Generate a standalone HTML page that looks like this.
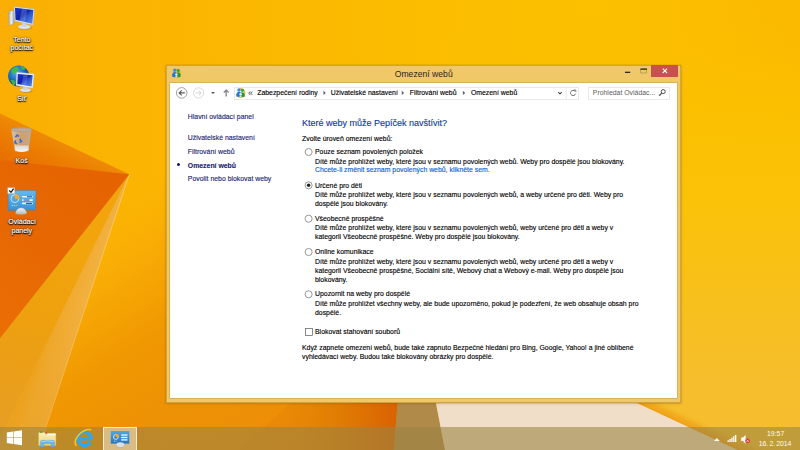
<!DOCTYPE html>
<html lang="cs">
<head>
<meta charset="utf-8">
<title>Omezení webů</title>
<style>
*{box-sizing:border-box;margin:0;padding:0}
html,body{width:800px;height:450px;overflow:hidden;background:#fbb10b;font-family:"Liberation Sans",sans-serif;}
#wall{position:absolute;left:0;top:0;width:800px;height:450px;display:block}
.dl{position:absolute;color:#fff;font-size:7px;line-height:8.6px;text-align:center;width:50px;text-shadow:0 .5px 1px rgba(0,0,0,1),0 0 1px rgba(0,0,0,.9),.4px .6px 1.5px rgba(0,0,0,.7),0 0 2.5px rgba(0,0,0,.4);-webkit-text-stroke:.15px #fff;white-space:nowrap}
.di{position:absolute;display:block}
#win{position:absolute;left:166px;top:64.5px;width:515.4px;height:338.1px;background:#f0c868;box-shadow:inset 0 0 0 .7px rgba(176,136,40,.75),0 0 0 .4px rgba(150,100,10,.35),0 .5px 3px rgba(120,70,0,.28)}
#client{position:absolute;left:4.2px;top:18.2px;width:506.8px;height:315.3px;background:#fff;box-shadow:0 0 0 .6px rgba(196,156,60,.8)}
#title{position:absolute;left:0;top:4px;width:100%;text-align:center;font-size:8.65px;line-height:10px;color:#2b2718}
#close{position:absolute;left:485px;top:0.3px;width:26.6px;height:12.3px;background:#c8504f}
.t{position:absolute;white-space:nowrap;font-size:6.9px;line-height:8.8px;color:#000;-webkit-text-stroke:.13px currentColor}
.nav{color:#1b1f73}
.link{color:#0560d8}
.h1{font-size:9px;line-height:11px;color:#0c3ca6}
.b{font-weight:bold}
.g{color:#5c5c5c;-webkit-text-stroke:0}
.box{position:absolute;border:0.7px solid #e9e9e9;background:#fff}
#taskbar{position:absolute;left:0;top:426.6px;width:800px;height:23.4px;background:rgba(154,131,67,.58)}
.tb{position:absolute;color:#fdfbf4;font-size:6.9px;line-height:8px;white-space:nowrap;text-align:center}
</style>
</head>
<body>
<svg id="wall" viewBox="0 0 800 450" width="800" height="450">
<defs>
<linearGradient id="gbase" x1="0" y1="0" x2="1" y2="0">
<stop offset="0" stop-color="#faae04"/><stop offset=".12" stop-color="#fbb302"/><stop offset=".5" stop-color="#fbbc00"/><stop offset=".75" stop-color="#fcc000"/><stop offset="1" stop-color="#fbb900"/>
</linearGradient>
<linearGradient id="gright" x1="0" y1="0" x2="0" y2="1">
<stop offset="0" stop-color="#fbbc00" stop-opacity="0"/><stop offset=".1" stop-color="#fbbe00" stop-opacity=".3"/><stop offset=".24" stop-color="#fbc000" stop-opacity=".9"/><stop offset=".45" stop-color="#fac208"/><stop offset=".85" stop-color="#f6be2c"/><stop offset="1" stop-color="#f6be30"/>
</linearGradient>
<linearGradient id="gmid" gradientUnits="userSpaceOnUse" x1="150" y1="185" x2="330" y2="470">
<stop offset="0" stop-color="#fab004" stop-opacity="0"/><stop offset=".14" stop-color="#f9ad05"/><stop offset=".3" stop-color="#f3a003"/><stop offset=".38" stop-color="#f09802"/><stop offset=".62" stop-color="#ed9004"/><stop offset=".85" stop-color="#ea8804"/><stop offset="1" stop-color="#e88204"/>
</linearGradient>
<linearGradient id="gmidr" gradientUnits="userSpaceOnUse" x1="285" y1="0" x2="398" y2="0">
<stop offset="0" stop-color="#e88808" stop-opacity=".5"/><stop offset=".45" stop-color="#e07c03" stop-opacity=".9"/><stop offset="1" stop-color="#d96203"/>
</linearGradient>
<linearGradient id="gfold" gradientUnits="userSpaceOnUse" x1="60" y1="250" x2="10" y2="420">
<stop offset="0" stop-color="#f1a40c"/><stop offset=".4" stop-color="#eea00e"/><stop offset="1" stop-color="#e89e22"/>
</linearGradient>
<linearGradient id="gwedge" gradientUnits="userSpaceOnUse" x1="50" y1="317" x2="80" y2="327">
<stop offset="0" stop-color="#eea214"/><stop offset=".3" stop-color="#f0aa2e"/><stop offset="1" stop-color="#f2b142"/>
</linearGradient>
<linearGradient id="gwfade" gradientUnits="userSpaceOnUse" x1="0" y1="300" x2="0" y2="440">
<stop offset="0" stop-color="#eba226" stop-opacity="0"/><stop offset="1" stop-color="#eba226" stop-opacity=".75"/>
</linearGradient>
<linearGradient id="gline" gradientUnits="userSpaceOnUse" x1="0" y1="174" x2="0" y2="450">
<stop offset="0" stop-color="#fbd98a" stop-opacity=".9"/><stop offset=".5" stop-color="#f8cf78" stop-opacity=".7"/><stop offset="1" stop-color="#f4c060" stop-opacity=".35"/>
</linearGradient>
<linearGradient id="gedge" gradientUnits="userSpaceOnUse" x1="680" y1="423" x2="684.600" y2="413">
<stop offset="0" stop-color="#ee9c16"/><stop offset=".15" stop-color="#f0a41a"/><stop offset=".5" stop-color="#f2aa1e" stop-opacity=".85"/><stop offset="1" stop-color="#f4b426" stop-opacity="0"/>
</linearGradient>
<linearGradient id="gsweep" gradientUnits="userSpaceOnUse" x1="120" y1="0" x2="200" y2="0">
<stop offset="0" stop-color="#ef940a" stop-opacity="0"/><stop offset="1" stop-color="#ef940a" stop-opacity=".45"/>
</linearGradient>
<linearGradient id="gdark" gradientUnits="userSpaceOnUse" x1="110" y1="180" x2="0" y2="330">
<stop offset="0" stop-color="#e56401"/><stop offset=".5" stop-color="#e76803"/><stop offset="1" stop-color="#ea6e04"/>
</linearGradient>
<linearGradient id="gband" gradientUnits="userSpaceOnUse" x1="30" y1="128" x2="11" y2="169">
<stop offset="0" stop-color="#ee8a06"/><stop offset=".45" stop-color="#eb7b01"/><stop offset="1" stop-color="#e76c01"/>
</linearGradient>
</defs>
<rect width="800" height="450" fill="url(#gbase)"/>
<rect x="440" width="360" height="450" fill="url(#gright)"/>
<polygon points="129.3,174 200,120 420,120 420,450 38,450 46.500,426" fill="url(#gmid)"/>
<polygon points="130,398 296,398 240,450 84,450" fill="url(#gsweep)"/>
<polygon points="296,398 398,398 393.700,450 240,450" fill="url(#gmidr)"/>
<polygon points="129.3,174 46.500,426 38,450 0,450 0,338" fill="url(#gfold)"/>
<polygon points="129.3,174 46.500,426 38.600,450 0,450 0,438" fill="url(#gwedge)"/>
<polygon points="129.3,174 46.500,426 38.600,450 0,450 0,438" fill="url(#gwfade)"/>
<line x1="129.300" y1="174" x2="38.400" y2="450" stroke="url(#gline)" stroke-width=".8"/>
<polygon points="0,113.400 129.300,174.200 0,338" fill="url(#gband)"/>
<polygon points="0,160 129.300,174.200 0,338" fill="url(#gdark)"/>
<polygon points="398,398 435,398 445,450 393.700,450" fill="#b08a48"/>
<polygon points="435,398 626,398 636.500,402.800 738,450 445,450" fill="#f0dec8"/>
<polygon points="626,397.800 652,397.800 764,450 738,450" fill="url(#gedge)"/>
</svg>
<svg class="di" style="left:0;top:0" width="60" height="240" viewBox="0 0 60 240">
<defs>
<linearGradient id="scr" x1="0" y1="0" x2="1" y2="1"><stop offset="0" stop-color="#1a36c8"/><stop offset=".45" stop-color="#0c22a6"/><stop offset=".6" stop-color="#2a55d0"/><stop offset="1" stop-color="#5d90ea"/></linearGradient>
<linearGradient id="met" x1="0" y1="0" x2="1" y2="0"><stop offset="0" stop-color="#aeb4be"/><stop offset=".45" stop-color="#eef0f4"/><stop offset="1" stop-color="#9aa1ad"/></linearGradient>
<radialGradient id="glb" cx=".4" cy=".35" r=".7"><stop offset="0" stop-color="#52b4ea"/><stop offset=".55" stop-color="#1a68b8"/><stop offset="1" stop-color="#0a3478"/></radialGradient>
<linearGradient id="cp" x1="0" y1="0" x2="0" y2="1"><stop offset="0" stop-color="#66b8ec"/><stop offset="1" stop-color="#3a90d6"/></linearGradient><linearGradient id="dome" x1="0" y1="0" x2="0" y2="1"><stop offset="0" stop-color="#f2f4f6"/><stop offset="1" stop-color="#b4bac3"/></linearGradient>
<linearGradient id="bin" x1="0" y1="0" x2="1" y2="0"><stop offset="0" stop-color="#d2cbc2" stop-opacity=".9"/><stop offset=".5" stop-color="#cfa47c" stop-opacity=".85"/><stop offset="1" stop-color="#b9aea2" stop-opacity=".9"/></linearGradient>
</defs>
<!-- Tento pocitac -->
<polygon points="8.7,11.8 14.3,10 14.3,23.6 9.3,25.5" fill="url(#met)" stroke="#8e959f" stroke-width=".4"/>
<circle cx="10" cy="13.3" r=".5" fill="#2fb52f"/>
<ellipse cx="25" cy="27.800" rx="7" ry="2.200" fill="#7a4a00" opacity=".3"/><ellipse cx="24.3" cy="26.9" rx="6.4" ry="2.3" fill="#dfe3e8" stroke="#a5abb5" stroke-width=".4"/>
<polygon points="21.5,22 26.5,23.2 26.2,27 22.3,26.6" fill="#cfd4db"/>
<polygon points="14,6.500 34.500,9 33.200,25.200 14.600,20.900" fill="#e4e8ee" stroke="#9aa2ae" stroke-width=".4"/>
<polygon points="15,7.700 33.400,10 32.300,23.700 15.500,19.800" fill="url(#scr)"/>
<polygon points="22,8.6 27.5,9.3 25,21.8 19.5,20.6" fill="#fff" opacity=".18"/>
<!-- Sit -->
<circle cx="18.7" cy="76" r="10.6" fill="url(#glb)"/>
<path d="M11,71 q3,-5 7,-4 q2,2 -1,4 q-1,3 -4,3 z M20,66.5 q4,-1 6,2 q-2,2 -4,1 z M10.5,80 q3,-1 5,2 q0,3 -2,3.500 z" fill="#3fbf3a" opacity=".9"/>
<ellipse cx="26.200" cy="90.900" rx="6.300" ry="2" fill="#7a4a00" opacity=".3"/><ellipse cx="25.5" cy="90.1" rx="5.8" ry="2" fill="#dfe3e8" stroke="#a5abb5" stroke-width=".4"/>
<polygon points="23,85.500 27.500,86.200 27.300,90 23.700,89.800" fill="#cfd4db"/>
<polygon points="16.6,72.3 34.2,73.8 32.9,88.2 16,85.400" fill="#eef1f5" stroke="#a9b0ba" stroke-width=".4"/>
<polygon points="17.8,73.900 32.700,75.200 31.600,86.400 17.300,84" fill="url(#scr)"/>
<polygon points="23.500,74.500 28,74.900 26,85.400 21.500,84.700" fill="#fff" opacity=".18"/>
<!-- Kos -->
<polygon points="11.4,130 31.4,130 28.5,151.200 15,151.200" fill="url(#bin)"/>
<ellipse cx="21.7" cy="149.400" rx="6.800" ry="2.500" fill="#f2f2f2"/>
<rect x="14.800" y="145.500" width="13.800" height="4" fill="#e4e4e4" opacity=".85"/>
<ellipse cx="21.4" cy="129.700" rx="10.2" ry="1.800" fill="#c9a98a" stroke="#a4a4a4" stroke-width="1"/>
<path d="M15.400,137.300 l1.800,-2.200 l1.800,1.200 M19.800,139 l1.600,2.300 l-1.900,1.200 M17.200,143.900 l-2.400,-1.300 l.9,-2.300" fill="none" stroke="#2b6fe0" stroke-width="1.600"/>
<!-- Ovladaci panely -->
<polygon points="8.100,190.600 36,190.600 35.500,210 8.100,210.600" fill="url(#cp)" stroke="#2f7fc4" stroke-width=".4"/>
<path d="M15.500,213.800 a5.600,6 0 0 1 11.200,0 q-5.600,1.200 -11.200,0z" fill="url(#dome)" stroke="#9aa0aa" stroke-width=".3"/>
<circle cx="14.900" cy="198.700" r="3.900" fill="none" stroke="#e8f4fc" stroke-width=".8" opacity=".9"/>
<path d="M14.900,198.700 L14.900,193.900 A4.800,4.800 0 0 1 19.700,198.700 Z" fill="#f7a62a"/>
<rect x="21.800" y="195.900" width="11.200" height="1.700" rx=".8" fill="#eaf5fd"/>
<rect x="21.800" y="199.200" width="11.200" height="1.700" rx=".8" fill="#eaf5fd"/>
<rect x="21.800" y="202.600" width="11.200" height="1.700" rx=".8" fill="#eaf5fd"/>
<rect x="27" y="196.200" width="5" height="1.100" fill="#1d5fae"/>
<rect x="23.500" y="199.500" width="6" height="1.100" fill="#1d5fae"/>
<rect x="26" y="202.900" width="6" height="1.100" fill="#1d5fae"/>
<rect x="11.500" y="204.800" width="1.500" height="1.300" fill="#7fe0ff"/><rect x="13.800" y="204.800" width="1.500" height="1.300" fill="#7fe0ff"/><rect x="16.100" y="204.800" width="1.500" height="1.300" fill="#f7a62a"/>
<rect x="7.600" y="187.600" width="7.200" height="6.200" fill="#fff" stroke="#9a9a9a" stroke-width=".4"/>
<path d="M9.300,190.500 l1.700,1.800 l2.600,-3.600" fill="none" stroke="#111" stroke-width="1.200"/>
</svg>
<div class="dl" style="left:-3.2px;top:35.6px">Tento</div>
<div class="dl" style="left:-3.2px;top:43.8px">počítač</div>
<div class="dl" style="left:-3.2px;top:94.8px">Síť</div>
<div class="dl" style="left:-3.4px;top:156.7px">Koš</div>
<div class="dl" style="left:-2.9px;top:218.2px">Ovládací</div>
<div class="dl" style="left:-3.2px;top:226.7px">panely</div>
<div id="win"><div id="title">Omezení webů</div><div id="close"></div><div id="client"></div></div>
<div class="box" style="left:233.5px;top:86.8px;width:345.5px;height:12.9px"></div>
<div class="box" style="left:588px;top:86.8px;width:81.5px;height:12.9px"></div>
<div class="t" style="left:247.9px;top:89px;font-size:9px;color:#3a3a3a;-webkit-text-stroke:0;margin-top:-.5px;">«</div>
<div class="t" style="left:257.2px;top:89px;">Zabezpečení rodiny</div>
<div class="t" style="left:330.8px;top:89px;">Uživatelské nastavení</div>
<div class="t" style="left:409.8px;top:89px;">Filtrování webů</div>
<div class="t" style="left:470.9px;top:89px;">Omezení webů</div>
<div class="t g" style="left:592.8px;top:89px;">Prohledat Ovládac...</div>
<div class="t nav" style="left:187.8px;top:113px;">Hlavní ovládací panel</div>
<div class="t nav" style="left:187.8px;top:134px;">Uživatelské nastavení</div>
<div class="t nav" style="left:187.8px;top:148px;">Filtrování webů</div>
<div class="t nav b" style="left:187.8px;top:162px;">Omezení webů</div>
<div class="t nav" style="left:187.8px;top:175px;">Povolit nebo blokovat weby</div>
<div style="position:absolute;left:176.9px;top:163.2px;width:3.2px;height:3.2px;border-radius:50%;background:#16164e"></div>
<div class="t h1" style="left:302px;top:118px">Které weby může Pepíček navštívit?</div>
<div class="t" style="left:302.0px;top:135px;">Zvolte úroveň omezení webů:</div>
<div class="t" style="left:315.0px;top:148px;">Pouze seznam povolených položek</div>
<div class="t" style="left:315.0px;top:158px;">Dítě může prohlížet weby, které jsou v seznamu povolených webů. Weby pro dospělé jsou blokovány.</div>
<div class="t link" style="left:315.0px;top:166px;">Chcete-li změnit seznam povolených webů, klikněte sem.</div>
<div class="t" style="left:315.0px;top:182px;">Určené pro děti</div>
<div class="t" style="left:315.0px;top:191px;">Dítě může prohlížet weby, které jsou v seznamu povolených webů, a weby určené pro děti. Weby pro</div>
<div class="t" style="left:315.0px;top:200px;">dospělé jsou blokovány.</div>
<div class="t" style="left:315.0px;top:215px;">Všeobecně prospěšné</div>
<div class="t" style="left:315.0px;top:224px;">Dítě může prohlížet weby, které jsou v seznamu povolených webů, weby určené pro děti a weby v</div>
<div class="t" style="left:315.0px;top:233px;">kategorii Všeobecně prospěšné. Weby pro dospělé jsou blokovány.</div>
<div class="t" style="left:315.0px;top:248px;">Online komunikace</div>
<div class="t" style="left:315.0px;top:258px;">Dítě může prohlížet weby, které jsou v seznamu povolených webů, weby určené pro děti a weby v</div>
<div class="t" style="left:315.0px;top:267px;">kategorii Všeobecně prospěšné, Sociální sítě, Webový chat a Webový e-mail. Weby pro dospělé jsou</div>
<div class="t" style="left:315.0px;top:276px;">blokovány.</div>
<div class="t" style="left:315.0px;top:290px;">Upozornit na weby pro dospělé</div>
<div class="t" style="left:315.0px;top:300px;">Dítě může prohlížet všechny weby, ale bude upozorněno, pokud je podezření, že web obsahuje obsah pro</div>
<div class="t" style="left:315.0px;top:309px;">dospělé.</div>
<div class="t" style="left:315.0px;top:328px;">Blokovat stahování souborů</div>
<div class="t" style="left:302.0px;top:344px;">Když zapnete omezení webů, bude také zapnuto Bezpečné hledání pro Bing, Google, Yahoo! a jiné oblíbené</div>
<div class="t" style="left:302.0px;top:353px;">vyhledávací weby. Budou také blokovány obrázky pro dospělé.</div>
<svg class="di" style="left:300px;top:140px" width="20" height="200" viewBox="300 140 20 200"><circle cx="308.6" cy="152.0" r="3.55" fill="#fff" stroke="#6e6e6e" stroke-width=".7"/><circle cx="308.6" cy="185.3" r="3.55" fill="#fff" stroke="#6e6e6e" stroke-width=".7"/><circle cx="308.6" cy="185.3" r="1.75" fill="#222"/><circle cx="308.6" cy="218.7" r="3.55" fill="#fff" stroke="#6e6e6e" stroke-width=".7"/><circle cx="308.6" cy="252.0" r="3.55" fill="#fff" stroke="#6e6e6e" stroke-width=".7"/><circle cx="308.6" cy="294.3" r="3.55" fill="#fff" stroke="#6e6e6e" stroke-width=".7"/><rect x="305.5" y="328.5" width="7" height="6.900" fill="#fff" stroke="#5a5a5a" stroke-width=".7"/></svg>
<svg class="di" style="left:160px;top:60px" width="530" height="50" viewBox="160 60 530 50">
<g transform="translate(176.60 73.00) scale(1.080)"><path d="M-1.500,-3.600 A3.900,3.900 0 1 1 -3.300,2.600" fill="none" stroke="#f4b63c" stroke-width="1.100"/><circle cx="1.500" cy="-2.300" r="1.500" fill="#3aa635"/><path d="M-.8,3.400 q0,-4 2.300,-4 q2.300,0 2.300,4 q-2.300,1.300 -4.600,0z" fill="#2f9a2c"/><circle cx="-1.700" cy="-2.600" r="1.600" fill="#3f8fe0"/><path d="M-4.300,3.300 q0,-4.300 2.600,-4.300 q2.600,0 2.600,4.300 q-2.600,1.400 -5.200,0z" fill="#2b78d0"/><circle cx="-.2" cy="1.400" r="1.100" fill="#e9edf2"/><path d="M-1.300,4 q0,-1.700 1.100,-1.700 q1.100,0 1.100,1.700z" fill="#d4dae2"/></g><g transform="translate(240.80 92.80) scale(1.080)"><path d="M-1.500,-3.600 A3.900,3.900 0 1 1 -3.300,2.600" fill="none" stroke="#f4b63c" stroke-width="1.100"/><circle cx="1.500" cy="-2.300" r="1.500" fill="#3aa635"/><path d="M-.8,3.400 q0,-4 2.300,-4 q2.300,0 2.300,4 q-2.300,1.300 -4.600,0z" fill="#2f9a2c"/><circle cx="-1.700" cy="-2.600" r="1.600" fill="#3f8fe0"/><path d="M-4.300,3.300 q0,-4.300 2.600,-4.300 q2.600,0 2.600,4.300 q-2.600,1.400 -5.200,0z" fill="#2b78d0"/><circle cx="-.2" cy="1.400" r="1.100" fill="#e9edf2"/><path d="M-1.300,4 q0,-1.700 1.100,-1.700 q1.100,0 1.100,1.700z" fill="#d4dae2"/></g>
<circle cx="181.700" cy="92.900" r="5.300" fill="#fff" stroke="#7a7a7a" stroke-width=".7"/>
<path d="M184.800,92.900 h-5.600 M181.700,90.400 l-2.600,2.500 l2.600,2.500" fill="none" stroke="#585858" stroke-width="1.100"/>
<circle cx="198.600" cy="92.900" r="5.100" fill="#fff" stroke="#c9c9c9" stroke-width=".7"/>
<path d="M195.700,92.900 h5.400 M198.800,90.600 l2.400,2.300 l-2.400,2.300" fill="none" stroke="#cfcfcf" stroke-width=".9"/>
<path d="M211,91.900 h4 l-2,2.200z" fill="#555"/>
<path d="M226.200,96.600 v-6 M223.800,92.400 l2.400,-2.500 l2.400,2.500" fill="none" stroke="#8a8a8a" stroke-width="1.400"/>
<path d="M558.200,92 l1.800,1.900 l1.800,-1.900" fill="none" stroke="#444" stroke-width="1.050"/>
<line x1="566.200" y1="87.300" x2="566.200" y2="99.700" stroke="#dcdcdc" stroke-width=".6"/>
<path d="M575,91.200 a2.600,2.600 0 1 0 .6,2.600" fill="none" stroke="#555" stroke-width=".8"/>
<path d="M573.700,90 h2.100 v2.100" fill="none" stroke="#555" stroke-width=".7"/>
<circle cx="663.200" cy="91.600" r="2" fill="none" stroke="#4e4e4e" stroke-width="1"/>
<line x1="661.700" y1="93.100" x2="659.200" y2="95.700" stroke="#4e4e4e" stroke-width="1.250"/>
<rect x="625" y="71.700" width="5.200" height="1.200" fill="#1a1a1a"/>
<rect x="640.800" y="69.100" width="5.900" height="3.900" fill="none" stroke="#7d6f45" stroke-width=".45"/>
<rect x="640.500" y="68.500" width="6.500" height="1.200" fill="#1a1a1a"/>
<path d="M662.700,68.700 l4.400,4.300 M667.100,68.700 l-4.400,4.300" stroke="#fff" stroke-width="1.050" fill="none"/>
<path d="M323.500,90.700 l2.300,2.200 l-2.300,2.200z M401.800,90.700 l2.300,2.200 l-2.300,2.200z M462.900,90.700 l2.300,2.200 l-2.300,2.200z" fill="#5f5f5f"/>
</svg>
<div id="taskbar"></div>
<div style="position:absolute;left:103px;top:426.800px;width:34.200px;height:23.200px;background:rgba(245,240,225,.5);border:.8px solid rgba(255,246,225,.8);border-bottom:0"></div>
<svg class="di" style="left:0;top:424px" width="800" height="26" viewBox="0 424 800 26">
<defs>
<linearGradient id="cp2" x1="0" y1="0" x2="0" y2="1"><stop offset="0" stop-color="#4ea6e4"/><stop offset="1" stop-color="#2276c4"/></linearGradient>
<linearGradient id="fold" x1="0" y1="0" x2="0" y2="1"><stop offset="0" stop-color="#fbeeb4"/><stop offset="1" stop-color="#f1d678"/></linearGradient>
</defs>
<!-- start -->
<polygon points="6.800,432.400 13,431.500 13,437.450 6.800,437.450" fill="#fff"/>
<polygon points="13.600,431.400 22,430.200 22,437.450 13.600,437.450" fill="#fff"/>
<polygon points="6.800,438 13,438 13,443.900 6.800,443" fill="#fff"/>
<polygon points="13.600,438 22,438 22,445.200 13.600,444" fill="#fff"/>
<!-- explorer -->
<path d="M38.600,432.600 h7 l1,1.200 h9.300 v11.700 h-17.300z" fill="url(#fold)" stroke="#d9b85a" stroke-width=".4"/>
<rect x="40" y="431.400" width="2.400" height="1.300" fill="#2fae3a"/><rect x="45" y="432.300" width="2.400" height="1.300" fill="#d8452f"/><rect x="49.600" y="433.500" width="3" height="1.500" fill="#3b8de0"/>
<rect x="47" y="433.400" width="8.500" height="2" fill="#fdf7dc"/>
<path d="M40.400,447 v-4.800 q0,-1.900 1.900,-1.900 h10.400 q1.900,0 1.900,1.900 v4.800 h-3.600 v-3.300 h-7 v3.300z" fill="#6cb6e6" stroke="#4a92cc" stroke-width=".3"/>
<path d="M41.500,441.600 q6,-1.500 12,0" stroke="#bfe2f8" stroke-width=".8" fill="none"/>
<!-- ie -->
<path d="M91,438.900 h-11.500 M90.300,442.300 a6.600,6.800 0 1 1 .9,-3.400" fill="none" stroke="#2fa7ec" stroke-width="3.300"/>
<path d="M76.300,446 q-3.300,-4.500 2.700,-11.500 q6,-6 12.300,-4.800" fill="none" stroke="#f8c71e" stroke-width="1.400"/>
<!-- control panel (active) -->
<ellipse cx="120.300" cy="444.800" rx="3.800" ry="2.500" fill="#d5d9df" stroke="#9aa0aa" stroke-width=".3"/>
<rect x="110.800" y="431" width="18.500" height="12.600" fill="url(#cp2)"/>
<ellipse cx="120.300" cy="444.600" rx="3.700" ry="2.300" fill="#dcdfe4"/>
<circle cx="115.800" cy="437" r="2.400" fill="none" stroke="#e6f3fc" stroke-width=".8"/>
<path d="M115.800,437 v-3.300 a3.300,3.300 0 0 1 3.300,3.300z" fill="#f7a62a"/>
<rect x="121.200" y="434.300" width="6.300" height="1.400" fill="#e6f3fc"/><rect x="121.200" y="436.800" width="6.300" height="1.400" fill="#e6f3fc"/><rect x="121.200" y="439.200" width="6.300" height="1.400" fill="#e6f3fc"/>
<rect x="114" y="440.700" width="1" height="1" fill="#9be6ff"/><rect x="115.600" y="440.700" width="1" height="1" fill="#f7a62a"/>
<!-- tray -->
<path d="M714.100,440.900 l2.800,-2.900 l2.800,2.900z" fill="#fff"/>
<rect x="727.500" y="440.300" width="1.300" height="1.700" fill="#fff"/><rect x="729.400" y="439" width="1.300" height="3" fill="#fff"/><rect x="731.300" y="437.600" width="1.300" height="4.400" fill="#fff"/><rect x="733.200" y="436.200" width="1.300" height="5.800" fill="#fff"/><rect x="735" y="434.900" width="1.300" height="7.100" fill="#fff"/>
<path d="M741.300,437.500 h1.700 l2.600,-2.600 v8.800 l-2.600,-2.600 h-1.700z" fill="#fff"/>
<circle cx="747.600" cy="440.800" r="2.300" fill="#e3262a"/>
<path d="M746.400,439.600 l2.400,2.400 M748.800,439.600 l-2.400,2.400" stroke="#fff" stroke-width=".7"/>
</svg>
<div class="tb" style="left:755.600px;top:429.500px;width:40px">19:57</div>
<div class="tb" style="left:745px;top:439.800px;width:60px;word-spacing:-.55px;letter-spacing:-.1px">16. 2. 2014</div>
</body>
</html>
